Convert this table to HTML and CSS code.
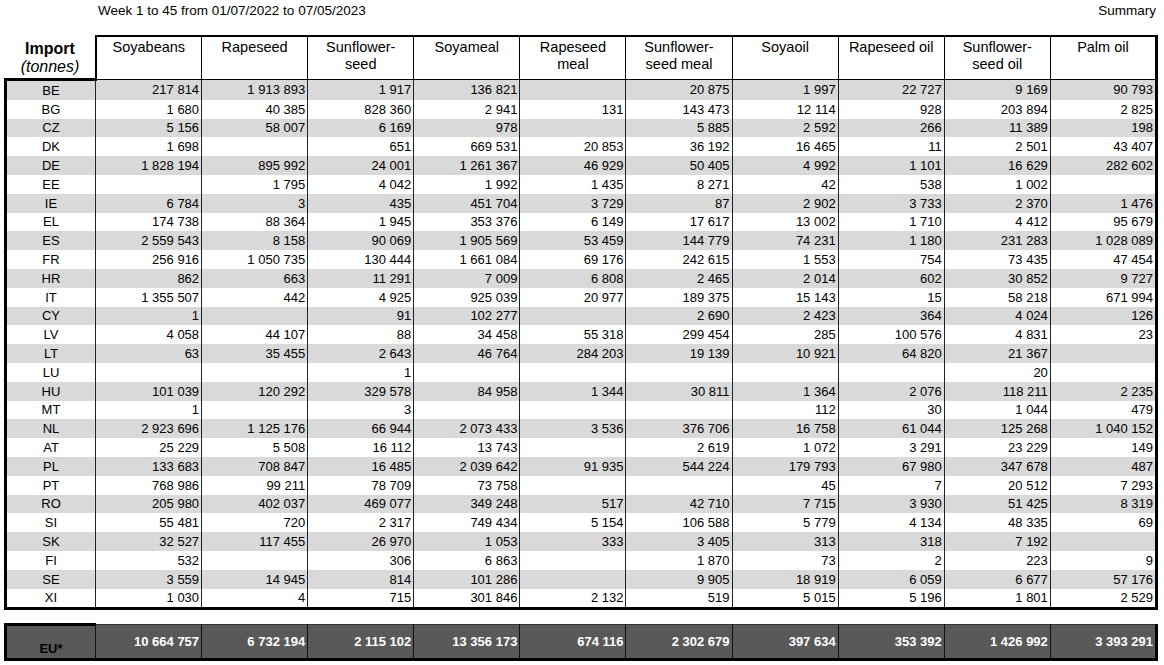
FILE: index.html
```html
<!DOCTYPE html>
<html lang="en">
<head>
<meta charset="utf-8">
<title>Import summary</title>
<link rel="stylesheet" href="styles.css">
</head>
<body>
<div class="title-bar">
  <span class="period">Week 1 to 45 from 01/07/2022 to 07/05/2023</span>
  <span class="summary">Summary</span>
</div>
<table class="grid">
  <colgroup>
    <col class="c-country"><col class="c-data"><col class="c-data"><col class="c-data"><col class="c-data"><col class="c-data"><col class="c-data"><col class="c-data"><col class="c-data"><col class="c-data"><col class="c-data">
  </colgroup>
  <thead>
    <tr>
      <th class="corner"><span class="imp">Import</span><span class="unit">(tonnes)</span></th>
      <th>Soyabeans</th><th>Rapeseed</th><th>Sunflower-<br>seed</th><th>Soyameal</th><th>Rapeseed<br>meal</th><th>Sunflower-<br>seed meal</th><th>Soyaoil</th><th>Rapeseed oil</th><th>Sunflower-<br>seed oil</th><th>Palm oil</th>
    </tr>
  </thead>
  <tbody>
    <tr><td>BE</td><td>217 814</td><td>1 913 893</td><td>1 917</td><td>136 821</td><td></td><td>20 875</td><td>1 997</td><td>22 727</td><td>9 169</td><td>90 793</td></tr>
    <tr><td>BG</td><td>1 680</td><td>40 385</td><td>828 360</td><td>2 941</td><td>131</td><td>143 473</td><td>12 114</td><td>928</td><td>203 894</td><td>2 825</td></tr>
    <tr><td>CZ</td><td>5 156</td><td>58 007</td><td>6 169</td><td>978</td><td></td><td>5 885</td><td>2 592</td><td>266</td><td>11 389</td><td>198</td></tr>
    <tr><td>DK</td><td>1 698</td><td></td><td>651</td><td>669 531</td><td>20 853</td><td>36 192</td><td>16 465</td><td>11</td><td>2 501</td><td>43 407</td></tr>
    <tr><td>DE</td><td>1 828 194</td><td>895 992</td><td>24 001</td><td>1 261 367</td><td>46 929</td><td>50 405</td><td>4 992</td><td>1 101</td><td>16 629</td><td>282 602</td></tr>
    <tr><td>EE</td><td></td><td>1 795</td><td>4 042</td><td>1 992</td><td>1 435</td><td>8 271</td><td>42</td><td>538</td><td>1 002</td><td></td></tr>
    <tr><td>IE</td><td>6 784</td><td>3</td><td>435</td><td>451 704</td><td>3 729</td><td>87</td><td>2 902</td><td>3 733</td><td>2 370</td><td>1 476</td></tr>
    <tr><td>EL</td><td>174 738</td><td>88 364</td><td>1 945</td><td>353 376</td><td>6 149</td><td>17 617</td><td>13 002</td><td>1 710</td><td>4 412</td><td>95 679</td></tr>
    <tr><td>ES</td><td>2 559 543</td><td>8 158</td><td>90 069</td><td>1 905 569</td><td>53 459</td><td>144 779</td><td>74 231</td><td>1 180</td><td>231 283</td><td>1 028 089</td></tr>
    <tr><td>FR</td><td>256 916</td><td>1 050 735</td><td>130 444</td><td>1 661 084</td><td>69 176</td><td>242 615</td><td>1 553</td><td>754</td><td>73 435</td><td>47 454</td></tr>
    <tr><td>HR</td><td>862</td><td>663</td><td>11 291</td><td>7 009</td><td>6 808</td><td>2 465</td><td>2 014</td><td>602</td><td>30 852</td><td>9 727</td></tr>
    <tr><td>IT</td><td>1 355 507</td><td>442</td><td>4 925</td><td>925 039</td><td>20 977</td><td>189 375</td><td>15 143</td><td>15</td><td>58 218</td><td>671 994</td></tr>
    <tr><td>CY</td><td>1</td><td></td><td>91</td><td>102 277</td><td></td><td>2 690</td><td>2 423</td><td>364</td><td>4 024</td><td>126</td></tr>
    <tr><td>LV</td><td>4 058</td><td>44 107</td><td>88</td><td>34 458</td><td>55 318</td><td>299 454</td><td>285</td><td>100 576</td><td>4 831</td><td>23</td></tr>
    <tr><td>LT</td><td>63</td><td>35 455</td><td>2 643</td><td>46 764</td><td>284 203</td><td>19 139</td><td>10 921</td><td>64 820</td><td>21 367</td><td></td></tr>
    <tr><td>LU</td><td></td><td></td><td>1</td><td></td><td></td><td></td><td></td><td></td><td>20</td><td></td></tr>
    <tr><td>HU</td><td>101 039</td><td>120 292</td><td>329 578</td><td>84 958</td><td>1 344</td><td>30 811</td><td>1 364</td><td>2 076</td><td>118 211</td><td>2 235</td></tr>
    <tr><td>MT</td><td>1</td><td></td><td>3</td><td></td><td></td><td></td><td>112</td><td>30</td><td>1 044</td><td>479</td></tr>
    <tr><td>NL</td><td>2 923 696</td><td>1 125 176</td><td>66 944</td><td>2 073 433</td><td>3 536</td><td>376 706</td><td>16 758</td><td>61 044</td><td>125 268</td><td>1 040 152</td></tr>
    <tr><td>AT</td><td>25 229</td><td>5 508</td><td>16 112</td><td>13 743</td><td></td><td>2 619</td><td>1 072</td><td>3 291</td><td>23 229</td><td>149</td></tr>
    <tr><td>PL</td><td>133 683</td><td>708 847</td><td>16 485</td><td>2 039 642</td><td>91 935</td><td>544 224</td><td>179 793</td><td>67 980</td><td>347 678</td><td>487</td></tr>
    <tr><td>PT</td><td>768 986</td><td>99 211</td><td>78 709</td><td>73 758</td><td></td><td></td><td>45</td><td>7</td><td>20 512</td><td>7 293</td></tr>
    <tr><td>RO</td><td>205 980</td><td>402 037</td><td>469 077</td><td>349 248</td><td>517</td><td>42 710</td><td>7 715</td><td>3 930</td><td>51 425</td><td>8 319</td></tr>
    <tr><td>SI</td><td>55 481</td><td>720</td><td>2 317</td><td>749 434</td><td>5 154</td><td>106 588</td><td>5 779</td><td>4 134</td><td>48 335</td><td>69</td></tr>
    <tr><td>SK</td><td>32 527</td><td>117 455</td><td>26 970</td><td>1 053</td><td>333</td><td>3 405</td><td>313</td><td>318</td><td>7 192</td><td></td></tr>
    <tr><td>FI</td><td>532</td><td></td><td>306</td><td>6 863</td><td></td><td>1 870</td><td>73</td><td>2</td><td>223</td><td>9</td></tr>
    <tr><td>SE</td><td>3 559</td><td>14 945</td><td>814</td><td>101 286</td><td></td><td>9 905</td><td>18 919</td><td>6 059</td><td>6 677</td><td>57 176</td></tr>
    <tr><td>XI</td><td>1 030</td><td>4</td><td>715</td><td>301 846</td><td>2 132</td><td>519</td><td>5 015</td><td>5 196</td><td>1 801</td><td>2 529</td></tr>
  </tbody>
</table>
<table class="grid total">
  <colgroup>
    <col class="c-country"><col class="c-data"><col class="c-data"><col class="c-data"><col class="c-data"><col class="c-data"><col class="c-data"><col class="c-data"><col class="c-data"><col class="c-data"><col class="c-data">
  </colgroup>
  <tbody>
    <tr><td>EU*</td><td>10 664 757</td><td>6 732 194</td><td>2 115 102</td><td>13 356 173</td><td>674 116</td><td>2 302 679</td><td>397 634</td><td>353 392</td><td>1 426 992</td><td>3 393 291</td></tr>
  </tbody>
</table>
</body>
</html>
```
FILE: styles.css
```css
html, body {
  margin: 0;
  padding: 0;
  background: #fff;
}

body {
  font-family: "Liberation Sans", Arial, sans-serif;
  color: #000;
}

.title-bar {
  display: flex;
  justify-content: space-between;
  align-items: center;
  height: 22px;
  padding: 0 8px 0 98px;
  font-size: 13.5px;
  line-height: 22px;
}

.grid {
  border-collapse: collapse;
  table-layout: fixed;
  width: 1154px;
  margin: 13px 0 0 4px;
}

.c-country { width: 90px; }

.grid th {
  font-weight: normal;
  font-size: 14.5px;
  line-height: 17px;
  text-align: center;
  vertical-align: top;
  padding: 2px 2px 0;
  height: 40px;
  border: 1px solid #000;
  border-top: 2px solid #000;
}

.grid th:nth-child(2) { border-left: 2px solid #000; }
.grid th:last-child { border-right: 3px solid #000; }

.grid th.corner {
  border: none;
  vertical-align: bottom;
  padding: 0 0 2px;
  font-size: 16px;
  line-height: 18px;
}

.corner .imp {
  display: block;
  font-weight: bold;
}

.corner .unit {
  display: block;
  font-style: italic;
}

.grid td {
  font-size: 13px;
  line-height: 15px;
  height: 18.8px;
  padding: 0 2px 0 0;
  text-align: right;
  vertical-align: middle;
  border-left: 1px solid #222;
  border-right: 1px solid #222;
}

.grid td:first-child {
  text-align: center;
  padding: 0;
  border-left: 3px solid #000;
  border-right: 1px solid #222;
}

.grid td:last-child { border-right: 3px solid #000; }

.grid tbody tr:nth-child(odd) td { background: #d9d9d9; }

.grid tbody tr:first-child td:first-child { border-top: 3px solid #000; }

.grid tbody tr:last-child td { border-bottom: 3px solid #000; }

.grid.total {
  margin-top: 13px;
}

.grid.total tbody tr td {
  background: #595959;
  color: #fff;
  font-weight: bold;
  height: 30px;
  border-top: 1px solid #333;
  border-left: 1px solid #111;
  border-right: 1px solid #111;
  border-bottom: 3px solid #000;
}

.grid.total tbody tr td:first-child {
  color: #000;
  vertical-align: bottom;
  padding-bottom: 2px;
  border-left: 3px solid #000;
}

.grid.total tbody tr td:last-child { border-right: 3px solid #000; }
```
